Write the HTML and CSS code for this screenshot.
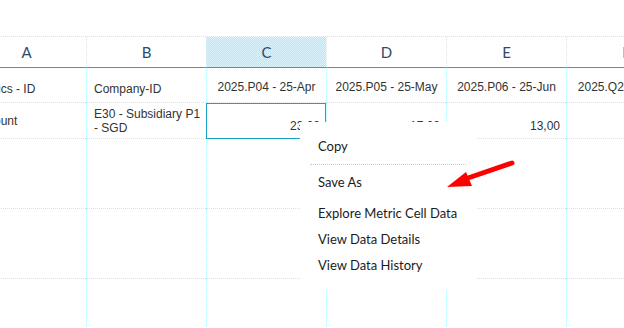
FILE: index.html
```html
<!DOCTYPE html>
<html lang="en">
<head>
    <meta charset="UTF-8">
    <meta name="viewport" content="width=device-width, initial-scale=1.0">
    <title>Metric Grid</title>
    <link rel="stylesheet" href="styles.css">
</head>
<body>
    <div class="sheet">
        <div class="cell col-head">A</div>
        <div class="cell col-head">B</div>
        <div class="cell col-head selected-col">C</div>
        <div class="cell col-head">D</div>
        <div class="cell col-head">E</div>
        <div class="cell col-head">F</div>

        <div class="cell label">Metrics - ID</div>
        <div class="cell label">Company-ID</div>
        <div class="cell period">2025.P04 - 25-Apr</div>
        <div class="cell period">2025.P05 - 25-May</div>
        <div class="cell period">2025.P06 - 25-Jun</div>
        <div class="cell period">2025.Q2 - Quarter</div>

        <div class="cell label mid">Account</div>
        <div class="cell label mid">E30 - Subsidiary P1 - SGD</div>
        <div class="cell num active">23,00</div>
        <div class="cell num">17,00</div>
        <div class="cell num">13,00</div>
        <div class="cell num"></div>

        <div class="cell"></div><div class="cell"></div><div class="cell"></div>
        <div class="cell"></div><div class="cell"></div><div class="cell"></div>
        <div class="cell"></div><div class="cell"></div><div class="cell"></div>
        <div class="cell"></div><div class="cell"></div><div class="cell"></div>
        <div class="cell"></div><div class="cell"></div><div class="cell"></div>
        <div class="cell"></div><div class="cell"></div><div class="cell"></div>
    </div>

    <ul class="menu">
        <li class="menu-item first">Copy</li>
        <li class="menu-sep"></li>
        <li class="menu-item">Save As</li>
        <li class="menu-item gap">Explore Metric Cell Data</li>
        <li class="menu-item">View Data Details</li>
        <li class="menu-item">View Data History</li>
    </ul>

    <svg class="arrow" width="80" height="40" viewBox="0 0 80 40">
        <line x1="66" y1="15" x2="22" y2="30" stroke="#ff0000" stroke-width="5" stroke-linecap="round"/>
        <polygon points="1,39 20,24 26,38" fill="#ff0000"/>
    </svg>
</body>
</html>
```

FILE: styles.css
```css
body {
    margin: 0;
    width: 624px;
    height: 328px;
    overflow: hidden;
    background: #fff;
    position: relative;
    font-family: 'Liberation Sans', Arial, sans-serif;
    font-size: 12px;
    color: #333;
}
.sheet {
    display: grid;
    grid-template-columns: repeat(6, 120px);
    grid-template-rows: 31px 35px 36px 70px 70px 60px;
    margin-top: 36px;
    margin-left: -34px;
    border-top: 1px dotted #b4f0f8;
}
.cell {
    box-sizing: border-box;
    border-left: 1px dotted #b4f0f8;
    border-bottom: 1px dotted #b4f0f8;
    display: flex;
    white-space: nowrap;
    overflow: hidden;
}
.col-head {
    font-family: 'Lato', sans-serif;
    font-size: 15px;
    color: #2d4b6d;
    align-items: center;
    justify-content: center;
    border-bottom: 1px solid #1fa6cf;
}
.selected-col {
    background: repeating-conic-gradient(#b6e5fb 0 25%, #dcf4fe 0 50%) 0 0 / 2px 2px;
}
.label {
    align-items: flex-end;
    padding: 0 6px 6px 7px;
}
.label.mid {
    align-items: center;
    white-space: normal;
    line-height: 14px;
    padding: 0 1px 0 7px;
}
.period {
    align-items: center;
    justify-content: center;
    padding-top: 3px;
}
.num {
    align-items: flex-end;
    justify-content: flex-end;
    padding: 0 6px 5px 0;
}
.active {
    outline: 1px solid #19a3c2;
    outline-offset: -1px;
}
.menu {
    position: absolute;
    left: 300px;
    top: 122px;
    width: 176px;
    height: 167px;
    box-sizing: border-box;
    margin: 0;
    padding: 11px 0 0;
    list-style: none;
    background: #fff;
    font-family: 'Lato', sans-serif;
    font-size: 13px;
    color: #1b1b1b;
}
.menu-item {
    height: 26px;
    line-height: 26px;
    padding-left: 18px;
}
.menu-sep {
    margin: 5px 10px 4px;
    border-top: 1px dotted #c6c6ee;
}
.menu-item.gap {
    margin-top: 5px;
}
.arrow {
    position: absolute;
    left: 446px;
    top: 148px;
}
```
